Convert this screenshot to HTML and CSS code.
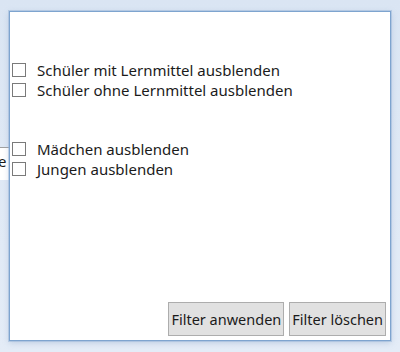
FILE: index.html
```html
<!DOCTYPE html>
<html lang="de">
<head>
    <meta charset="UTF-8">
    <title>Filter</title>
    <link rel="stylesheet" href="styles.css">
</head>
<body>
    <div class="backdrop">
        <div class="behind-row"><span class="behind-text">e</span></div>
    </div>

    <div class="filter-popup">
        <div class="option-group">
            <label class="option"><input type="checkbox"><span>Schüler mit Lernmittel ausblenden</span></label>
            <label class="option"><input type="checkbox"><span>Schüler ohne Lernmittel ausblenden</span></label>
        </div>
        <div class="option-group">
            <label class="option"><input type="checkbox"><span>Mädchen ausblenden</span></label>
            <label class="option"><input type="checkbox"><span>Jungen ausblenden</span></label>
        </div>
        <div class="actions">
            <button type="button">Filter anwenden</button>
            <button type="button">Filter löschen</button>
        </div>
    </div>
</body>
</html>
```

FILE: styles.css
```css
body {
    margin: 0;
    width: 400px;
    height: 352px;
    overflow: hidden;
    font-family: "Noto Sans", "Open Sans", sans-serif;
    background: linear-gradient(to bottom, #dae5f3, #e4ecf7);
    position: relative;
}

.backdrop {
    padding-top: 147px;
}

.behind-row {
    width: 9px;
    height: 32px;
    border-top: 1px solid #a0a0a0;
    background-color: #ffffff;
    overflow: hidden;
}

.behind-text {
    display: block;
    margin-left: -2px;
    margin-top: 4px;
    font-size: 15px;
    line-height: 18px;
    color: #1a1a1a;
}

.filter-popup {
    position: absolute;
    left: 9px;
    top: 11px;
    width: 382px;
    height: 330px;
    box-sizing: border-box;
    background-color: #ffffff;
    border: 1px solid #7ea4cf;
    box-shadow: 0 0 0 1px rgba(150, 180, 215, 0.5), 0 2px 6px rgba(120, 150, 190, 0.35);
    display: flex;
    flex-direction: column;
    padding-top: 48px;
}

.option-group {
    display: flex;
    flex-direction: column;
    gap: 1px;
    margin-bottom: 40px;
}

.option {
    display: flex;
    align-items: center;
    height: 19px;
    font-size: 15px;
    color: #1b1b1b;
}

.option input {
    appearance: none;
    margin: 0 11px 0 2px;
    width: 14px;
    height: 14px;
    border: 1px solid #7a7a7a;
    background-color: #ffffff;
    box-sizing: border-box;
}

.actions {
    margin-top: auto;
    display: flex;
    justify-content: flex-end;
    gap: 5px;
    padding: 0 4px 4px 0;
}

button {
    height: 34px;
    padding: 0 2px;
    font-family: inherit;
    font-size: 14.5px;
    color: #1b1b1b;
    background-color: #e1e1e1;
    border: 1px solid #adadad;
}
```
